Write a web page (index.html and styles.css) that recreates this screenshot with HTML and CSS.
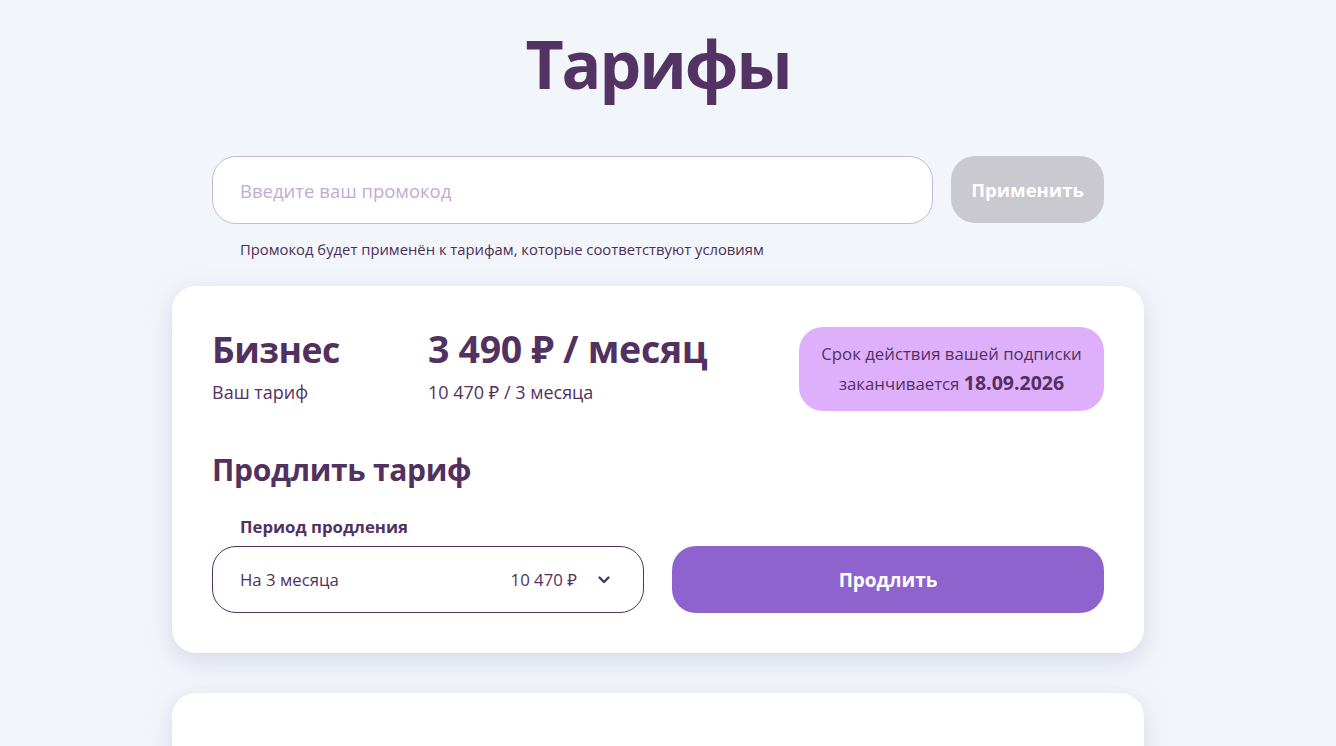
FILE: index.html
```html
<!DOCTYPE html>
<html lang="ru">

<head>
    <meta charset="UTF-8">
    <title>Тарифы</title>
    <meta name="viewport" content="width=device-width, initial-scale=1.0">
    <link rel="stylesheet" href="styles.css">
</head>

<body>
    <main class="tariffs">
        <h1 class="page-title">Тарифы</h1>

        <form class="promo" onsubmit="event.preventDefault()">
            <div class="promo-row">
                <input class="promo-input" type="text" placeholder="Введите ваш промокод">
                <button type="submit" class="btn btn-disabled">Применить</button>
            </div>
            <p class="promo-hint">Промокод будет применён к тарифам, которые соответствуют условиям</p>
        </form>

        <section class="card">
            <div class="card-head">
                <div class="plan">
                    <h2 class="plan-name">Бизнес</h2>
                    <p class="plan-sub">Ваш тариф</p>
                </div>
                <div class="price">
                    <div class="price-main">3 490 ₽ / месяц</div>
                    <p class="plan-sub">10 470 ₽ / 3 месяца</p>
                </div>
                <div class="expires">
                    Срок действия вашей подписки<br>
                    заканчивается <b>18.09.2026</b>
                </div>
            </div>

            <h3 class="renew-title">Продлить тариф</h3>
            <div class="renew-label">Период продления</div>
            <div class="renew-row">
                <div class="select">
                    <span>На 3 месяца</span>
                    <span class="select-price">10 470 ₽</span>
                    <svg class="chevron" width="14" height="14" viewBox="0 0 14 14">
                        <path d="M2.5 4.5l4.5 4.5 4.5-4.5" fill="none" stroke="#52315f" stroke-width="2.4"
                            stroke-linecap="round" stroke-linejoin="round" />
                    </svg>
                </div>
                <button class="btn btn-primary">Продлить</button>
            </div>
        </section>

        <section class="card card-next"></section>
    </main>
</body>

</html>
```

FILE: styles.css
```css
body {
    font-family: "Open Sans", "Noto Sans", Arial, sans-serif;
    background: #f2f5f9;
    margin: 0;
    padding-right: 20px;
    color: #52315f;
}

.tariffs {
    max-width: 972px;
    margin: 0 auto;
    padding-top: 18px;
}

.page-title {
    text-align: center;
    font-size: 66px;
    font-weight: 700;
    margin: 0 0 48px 0;
    line-height: 90px;
    color: #533264;
    letter-spacing: -2px;
}

.promo {
    padding: 0 40px;
}

.promo-row {
    display: flex;
    gap: 18px;
}

.promo-input {
    flex: 1;
    height: 68px;
    box-sizing: border-box;
    border: 1px solid #c9b6da;
    border-radius: 24px;
    padding: 0 27px;
    font-family: inherit;
    font-size: 18.5px;
    color: #52315f;
    background: #fff;
    outline: none;
}

.promo-input::placeholder {
    color: #c3aad6;
}

.btn {
    border: none;
    border-radius: 24px;
    font-family: inherit;
    font-weight: 700;
    color: #fff;
    cursor: pointer;
}

.btn-disabled {
    width: 153px;
    height: 67px;
    font-size: 18.5px;
    background: #cac9cf;
    cursor: default;
}

.promo-hint {
    margin: 15px 0 0 28px;
    font-size: 14.8px;
    line-height: 20px;
    color: #4b2f58;
}

.card {
    margin-top: 27px;
    background: #fff;
    border-radius: 24px;
    box-shadow: 0 8px 24px rgba(160, 165, 210, 0.35);
    padding: 40px 40px 40px 40px;
}

.card-head {
    display: flex;
    align-items: flex-start;
}

.plan {
    width: 216px;
    padding-top: 1px;
}

.plan-name {
    margin: 0;
    font-size: 35.5px;
    font-weight: 700;
    line-height: 44px;
    letter-spacing: -0.5px;
}

.plan-sub {
    margin: 0;
    font-size: 18px;
    line-height: 26px;
    margin-top: 8px;
}

.price {
    flex: 1;
    padding-top: 1px;
}

.price-main {
    font-size: 37.5px;
    font-weight: 700;
    line-height: 44px;
    letter-spacing: -0.3px;
}

.expires {
    width: 305px;
    box-sizing: border-box;
    margin-top: 1px;
    background: #deb0fc;
    border-radius: 24px;
    padding: 12px 8px 13px 8px;
    text-align: center;
    font-size: 16.8px;
    line-height: 29px;
    color: #52315f;
}

.expires b {
    font-size: 19.5px;
}

.renew-title {
    margin: 39px 0 0 0;
    font-size: 30px;
    font-weight: 700;
    line-height: 40px;
    letter-spacing: -0.3px;
}

.renew-label {
    margin: 26px 0 8px 28px;
    font-size: 16.8px;
    font-weight: 700;
    line-height: 22px;
}

.renew-row {
    display: grid;
    grid-template-columns: 1fr 1fr;
    gap: 28px;
}

.select {
    display: flex;
    align-items: center;
    height: 67px;
    box-sizing: border-box;
    border: 1px solid #52315f;
    border-radius: 24px;
    padding: 0 32px 0 27px;
    font-size: 16.8px;
}

.select-price {
    margin-left: auto;
    margin-right: 20px;
}

.chevron {
    display: block;
}

.btn-primary {
    height: 67px;
    background: #8e63cd;
    font-size: 19px;
}

.card-next {
    margin-top: 40px;
    height: 120px;
    padding: 0;
}
```
